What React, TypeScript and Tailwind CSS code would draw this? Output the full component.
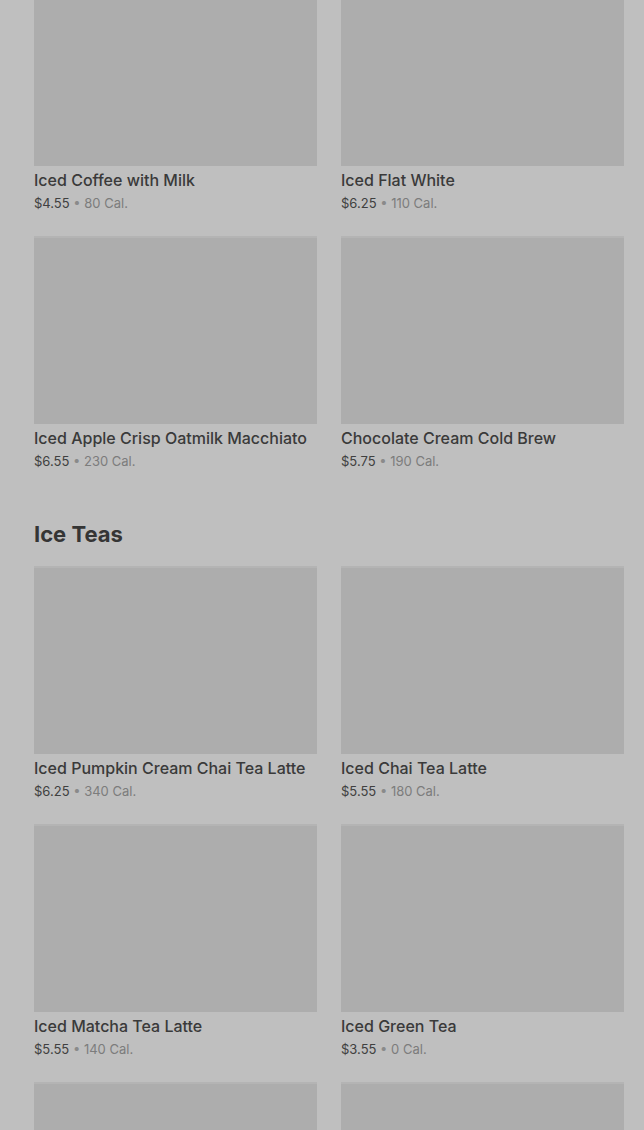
const FONT = "Inter, Roboto, 'Liberation Sans', sans-serif";

type Item = { name: string; price: string; cal: string };

const COLD: Item[] = [
  { name: "Iced Coffee with Milk", price: "$4.55", cal: "80 Cal." },
  { name: "Iced Flat White", price: "$6.25", cal: "110 Cal." },
  { name: "Iced Apple Crisp Oatmilk Macchiato", price: "$6.55", cal: "230 Cal." },
  { name: "Chocolate Cream Cold Brew", price: "$5.75", cal: "190 Cal." },
];

const TEAS: Item[] = [
  { name: "Iced Pumpkin Cream Chai Tea Latte", price: "$6.25", cal: "340 Cal." },
  { name: "Iced Chai Tea Latte", price: "$5.55", cal: "180 Cal." },
  { name: "Iced Matcha Tea Latte", price: "$5.55", cal: "140 Cal." },
  { name: "Iced Green Tea", price: "$3.55", cal: "0 Cal." },
];

function Card({ item }: { item: Item }) {
  return (
    <div className="flex flex-col">
      <div className="h-[188px] bg-[#adadad] border-t-2 border-[#b4b4b4]" />
      <div className="mt-1 text-[16px] leading-5 font-medium text-[#3a3a3a] whitespace-nowrap">
        {item.name}
      </div>
      <div className="mt-1 text-[13px] leading-[18px] text-[#404040]">
        {item.price}
        <span className="text-[#8a8a8a]"> • </span>
        <span className="text-[#7c7c7c]">{item.cal}</span>
      </div>
    </div>
  );
}

export default function App() {
  return (
    <div
      className="h-[1130px] overflow-hidden bg-[#bfbfbf] pl-[34px] pr-[20px]"
      style={{ fontFamily: FONT }}
    >
      <div className="grid grid-cols-2 gap-x-6 gap-y-6 -mt-[22px]">
        {COLD.map((it) => (
          <Card key={it.name} item={it} />
        ))}
      </div>
      <h2 className="mt-12 mb-4 text-[22px] leading-8 font-bold text-[#353535]">Ice Teas</h2>
      <div className="grid grid-cols-2 gap-x-6 gap-y-6">
        {TEAS.map((it) => (
          <Card key={it.name} item={it} />
        ))}
        <div className="h-[188px] bg-[#adadad] border-t-2 border-[#b4b4b4]" />
        <div className="h-[188px] bg-[#adadad] border-t-2 border-[#b4b4b4]" />
      </div>
    </div>
  );
}
